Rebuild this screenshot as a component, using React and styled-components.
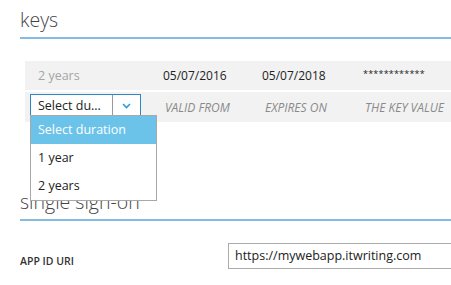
import React from 'react';
import styled, { createGlobalStyle } from 'styled-components';

const GlobalStyle = createGlobalStyle`
  html, body {
    margin: 0;
    padding: 0;
    background: #fff;
    overflow: hidden;
  }
  body {
    font-family: 'Open Sans', 'Noto Sans', sans-serif;
    color: #222;
  }
`;

const Page = styled.div`
  width: 451px;
  height: 285px;
  overflow: hidden;
`;

const Heading = styled.h2`
  margin: ${(p) => p.$top}px 0 0 20px;
  height: 39px;
  box-sizing: border-box;
  padding-top: 8px;
  font: 300 19.5px/24px 'Open Sans', sans-serif;
  color: #444;
  border-bottom: 2px solid #86bbe4;
`;

const KeyTable = styled.div`
  margin: 22px 0 0 25px;
  display: flex;
  flex-direction: column;
  gap: 2px;
`;

const Row = styled.div`
  display: grid;
  grid-template-columns: 125px 100px 100px 1fr;
  align-items: center;
  height: ${(p) => p.$h}px;
  background: #f2f2f2;
  font-size: 12px;
`;

const Cell = styled.div`
  padding-left: ${(p) => p.$pad ?? 13}px;
  white-space: nowrap;
  font-size: ${(p) => (p.$muted ? 12.5 : 12)}px;
  color: ${(p) => (p.$muted ? '#a5a5a5' : '#222')};
`;

const Secret = styled(Cell)`
  font-size: 9px;
  letter-spacing: 0.2px;
  margin-top: -5px;
`;

const ColLabel = styled.div`
  padding-left: 15px;
  font-style: italic;
  font-size: 12px;
  color: #8a8a8a;
  white-space: nowrap;
`;

const SelectWrap = styled.div`
  position: relative;
  margin-left: 5px;
  align-self: start;
  margin-top: 2px;
`;

const SelectBox = styled.div`
  display: flex;
  width: 111px;
  height: 23px;
  box-sizing: border-box;
  border: 1px solid #2b87c6;
  background: #fff;
  font-size: 12.5px;
`;

const SelectText = styled.div`
  flex: 1;
  padding-left: 7px;
  line-height: 21px;
  border-right: 1px solid #9a9a9a;
`;

const SelectButton = styled.div`
  width: 27px;
  display: flex;
  align-items: center;
  justify-content: center;
`;

const Options = styled.ul`
  position: absolute;
  top: 21px;
  left: 0;
  width: 127px;
  margin: 0;
  padding: 0;
  list-style: none;
  box-sizing: border-box;
  border: 1px solid #a8a8a8;
  background: #fff;
  z-index: 2;
`;

const Option = styled.li`
  height: 28px;
  line-height: 28px;
  padding-left: 7px;
  font-size: 12.5px;
  white-space: nowrap;
  background: ${(p) => (p.$active ? '#6bc3ea' : '#fff')};
  color: ${(p) => (p.$active ? '#fff' : '#222')};
`;

const FieldRow = styled.div`
  margin: 22px 0 0 20px;
  display: flex;
  align-items: center;
`;

const FieldLabel = styled.label`
  width: 208px;
  flex-shrink: 0;
  font-size: 10.5px;
  font-weight: 600;
  color: #333;
  padding-top: 10px;
`;

const TextInput = styled.div`
  width: 240px;
  flex-shrink: 0;
  height: 26px;
  box-sizing: border-box;
  border: 1px solid #ababab;
  border-right: none;
  padding-left: 6px;
  line-height: 24px;
  font-size: 12.5px;
  color: #222;
  white-space: nowrap;
`;

const Chevron = () => (
  <svg width="9" height="6" viewBox="0 0 9 6">
    <path d="M1 1l3.5 3.5L8 1" fill="none" stroke="#2a9de0" strokeWidth="1.6" />
  </svg>
);

const App = () => (
  <Page>
    <GlobalStyle />
    <Heading $top={0}>keys</Heading>
    <KeyTable>
      <Row $h={29}>
        <Cell $muted>2 years</Cell>
        <Cell>05/07/2016</Cell>
        <Cell $pad={12}>05/07/2018</Cell>
        <Secret $pad={13}>************</Secret>
      </Row>
      <Row $h={30}>
        <SelectWrap>
          <SelectBox>
            <SelectText>Select du...</SelectText>
            <SelectButton><Chevron /></SelectButton>
          </SelectBox>
          <Options>
            <Option $active>Select duration</Option>
            <Option>1 year</Option>
            <Option>2 years</Option>
          </Options>
        </SelectWrap>
        <ColLabel>VALID FROM</ColLabel>
        <ColLabel>EXPIRES ON</ColLabel>
        <ColLabel>THE KEY VALUE</ColLabel>
      </Row>
    </KeyTable>
    <Heading $top={60}>single sign-on</Heading>
    <FieldRow>
      <FieldLabel>APP ID URI</FieldLabel>
      <TextInput>https://mywebapp.itwriting.com</TextInput>
    </FieldRow>
  </Page>
);

export default App;
